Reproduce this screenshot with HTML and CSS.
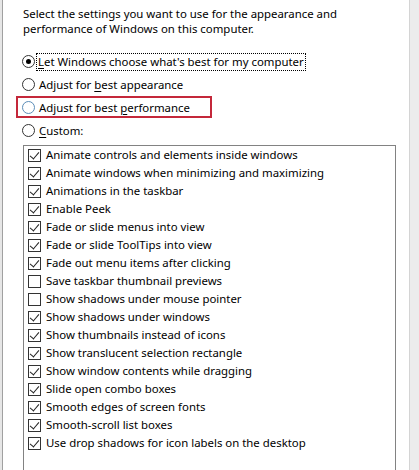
FILE: index.html
```html
<!DOCTYPE html>
<html lang="en">
<head>
    <meta charset="UTF-8">
    <title>Performance Options</title>
    <link rel="stylesheet" href="styles.css">
</head>
<body>
    <div class="frame">
        <div class="edge-left"></div>

        <div class="panel">
            <p class="intro">Select the settings you want to use for the appearance and performance of Windows on this computer.</p>

            <!-- Radio choices -->
            <div class="choices">
                <label class="choice">
                    <span class="radio checked"></span>
                    <span class="focus"><u>L</u>et Windows choose what's best for my computer</span>
                </label>
                <label class="choice">
                    <span class="radio"></span>
                    <span>Adjust for <u>b</u>est appearance</span>
                </label>
                <label class="choice marked">
                    <span class="radio hover"></span>
                    <span>Adjust for best <u>p</u>erformance</span>
                </label>
                <label class="choice">
                    <span class="radio"></span>
                    <span><u>C</u>ustom:</span>
                </label>
            </div>

            <!-- Checkbox list -->
            <div class="list-box">
                <div class="item"><span class="check on"></span>Animate controls and elements inside windows</div>
                <div class="item"><span class="check on"></span>Animate windows when minimizing and maximizing</div>
                <div class="item"><span class="check on"></span>Animations in the taskbar</div>
                <div class="item"><span class="check on"></span>Enable Peek</div>
                <div class="item"><span class="check on"></span>Fade or slide menus into view</div>
                <div class="item"><span class="check on"></span>Fade or slide ToolTips into view</div>
                <div class="item"><span class="check on"></span>Fade out menu items after clicking</div>
                <div class="item"><span class="check"></span>Save taskbar thumbnail previews</div>
                <div class="item"><span class="check"></span>Show shadows under mouse pointer</div>
                <div class="item"><span class="check on"></span>Show shadows under windows</div>
                <div class="item"><span class="check on"></span>Show thumbnails instead of icons</div>
                <div class="item"><span class="check on"></span>Show translucent selection rectangle</div>
                <div class="item"><span class="check on"></span>Show window contents while dragging</div>
                <div class="item"><span class="check on"></span>Slide open combo boxes</div>
                <div class="item"><span class="check on"></span>Smooth edges of screen fonts</div>
                <div class="item"><span class="check on"></span>Smooth-scroll list boxes</div>
                <div class="item"><span class="check on"></span>Use drop shadows for icon labels on the desktop</div>
            </div>
        </div>

        <div class="edge-right"></div>
    </div>
</body>
</html>
```

FILE: styles.css
```css
body {
    margin: 0;
    background-color: #ffffff;
    color: #000000;
    font-family: 'Noto Sans', sans-serif;
    font-size: 11.4px;
}
.frame {
    display: flex;
    width: 419px;
    height: 470px;
    overflow: hidden;
}
.edge-left {
    width: 2px;
    background-color: #e6e6e6;
    border-right: 1px solid #a0a0a0;
}
.edge-right {
    width: 9px;
    background-color: #ececec;
    border-left: 1px solid #d4d4d4;
}
.panel {
    flex: 1;
    padding: 6px 0 0 20px;
}
.intro {
    margin: 0;
    width: 320px;
    line-height: 15px;
}
.choices {
    margin-top: 14px;
    display: flex;
    flex-direction: column;
}
.choice {
    display: flex;
    align-items: center;
    height: 23px;
    position: relative;
}
.choice u {
    text-decoration-thickness: 1px;
    text-underline-offset: 2px;
}
.radio {
    width: 11px;
    height: 11px;
    border: 1px solid #333333;
    border-radius: 50%;
    background-color: #ffffff;
    margin: 0 4px 0 -1px;
    position: relative;
    flex-shrink: 0;
}
.radio.checked::after {
    content: "";
    position: absolute;
    left: 3px;
    top: 3px;
    width: 5px;
    height: 5px;
    border-radius: 50%;
    background-color: #000000;
}
.radio.hover {
    border-color: #5b8db8;
}
.focus {
    outline: 1px dotted #000000;
    outline-offset: 0;
    padding: 0 1px 1px 1px;
    margin-left: -2px;
}
.marked::before {
    content: "";
    position: absolute;
    left: -7px;
    top: 0;
    width: 192px;
    height: 18px;
    border: 2px solid #c4283a;
}
.list-box {
    margin-top: 3px;
    width: 371px;
    height: 360px;
    border: 1px solid #828282;
    line-height: 14px;
}
.item {
    display: flex;
    align-items: center;
    height: 18px;
    padding-left: 4px;
    white-space: nowrap;
}
.check {
    width: 11px;
    height: 11px;
    border: 1px solid #333333;
    margin: 1px 5px 0 0;
    flex-shrink: 0;
    position: relative;
}
.check.on::after {
    content: "";
    position: absolute;
    left: 3px;
    top: 0px;
    width: 4px;
    height: 8px;
    border-right: 1px solid #222222;
    border-bottom: 1px solid #222222;
    transform: rotate(40deg);
}
```
